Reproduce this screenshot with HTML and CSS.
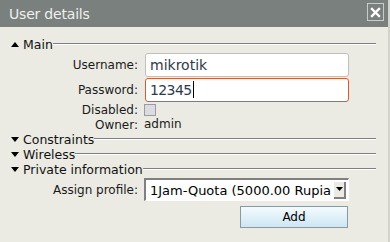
FILE: index.html
```html
<!DOCTYPE html>
<html lang="en">
<head>
  <meta charset="UTF-8">
  <title>User details</title>
  <link rel="stylesheet" href="styles.css">
</head>
<body>

  <!-- Dialog window -->
  <div class="window">
    <div class="titlebar">
      <span class="title">User details</span>
      <button class="close-btn" title="Close">
        <svg width="11" height="11" viewBox="0 0 11 11">
          <path d="M2 2 L9 9 M9 2 L2 9" stroke="#fff" stroke-width="2.4" stroke-linecap="square"/>
        </svg>
      </button>
    </div>

    <div class="content">
      <!-- Main section -->
      <div class="section">
        <div class="section-head">
          <span class="arrow up"></span>
          <span class="section-title">Main</span>
          <span class="rule"></span>
        </div>
        <div class="form-grid main-grid">
          <label class="field-label">Username:</label>
          <input class="text-input" type="text" value="mikrotik">

          <label class="field-label">Password:</label>
          <div class="text-input focused">12345<span class="caret"></span></div>

          <label class="field-label">Disabled:</label>
          <div class="check-cell"><span class="checkbox"></span></div>

          <label class="field-label">Owner:</label>
          <div class="static-value">admin</div>
        </div>
      </div>

      <!-- Collapsed sections -->
      <div class="section-head">
        <span class="arrow down"></span>
        <span class="section-title">Constraints</span>
        <span class="rule"></span>
      </div>
      <div class="section-head">
        <span class="arrow down"></span>
        <span class="section-title">Wireless</span>
        <span class="rule"></span>
      </div>

      <!-- Private information -->
      <div class="section">
        <div class="section-head">
          <span class="arrow down"></span>
          <span class="section-title">Private information</span>
          <span class="rule"></span>
        </div>
        <div class="form-grid">
          <label class="field-label">Assign profile:</label>
          <div class="select-box">
            <span class="select-text">1Jam-Quota (5000.00 Rupiah)</span>
            <span class="select-btn">
              <svg width="7" height="4" viewBox="0 0 7 4"><path d="M0 0 H7 L3.5 4 Z" fill="#000"/></svg>
            </span>
          </div>
        </div>
      </div>

      <div class="actions">
        <button class="add-btn">Add</button>
      </div>
    </div>
  </div>

</body>
</html>
```

FILE: styles.css
```css
body {
  margin: 0;
  background: #ebebe3;
  font-family: "DejaVu Sans", sans-serif;
  font-size: 12px;
  color: #1a1a1a;
}

.window {
  width: 390px;
  height: 242px;
  box-sizing: border-box;
  border-right: 2px solid #d2d3cc;
  background: #ebebe3;
  overflow: hidden;
}

/* Title bar */
.titlebar {
  height: 27px;
  background: #7a807d;
  display: flex;
  align-items: center;
  justify-content: space-between;
  padding: 0 4px 0 9px;
}

.title {
  color: #eef1ee;
  font-size: 14px;
  letter-spacing: -0.2px;
}

.close-btn {
  width: 17px;
  height: 18px;
  margin-top: -3px;
  padding: 0;
  border: 1px solid #c9cdca;
  background: transparent;
  display: flex;
  align-items: center;
  justify-content: center;
}

.content {
  padding: 10px 11px 0 11px;
}

/* Section headers */
.section-head {
  display: flex;
  align-items: center;
  height: 15px;
  line-height: 15px;
}

.arrow {
  width: 0;
  height: 0;
  border-left: 4px solid transparent;
  border-right: 4px solid transparent;
  margin-right: 4px;
}

.arrow.up {
  border-bottom: 5px solid #000;
}

.arrow.down {
  border-top: 5px solid #000;
}

.section-title {
  font-size: 12.5px;
  color: #111;
}

.rule {
  flex: 1;
  align-self: flex-start;
  height: 1px;
  margin-top: 6px;
  margin-right: 1px;
  background: #7f7f7f;
  border-bottom: 1px solid #fff;
}

/* Form rows */
.form-grid {
  display: grid;
  grid-template-columns: 127px 204px;
  column-gap: 6px;
  row-gap: 1px;
  align-items: center;
  padding-top: 1px;
}

.main-grid {
  grid-template-rows: 24px 24px 13px 15px;
}

.field-label {
  text-align: right;
  line-height: 14px;
}

.text-input {
  box-sizing: border-box;
  height: 24px;
  width: 204px;
  margin-left: 1px;
  border: 1px solid #c0c0bc;
  border-radius: 3px;
  background: #fff;
  padding: 0 4px;
  font-family: "DejaVu Sans", sans-serif;
  font-size: 14px;
  color: #2d3a4c;
  line-height: 22px;
  outline: none;
}

.text-input.focused {
  border-color: #e0592a;
  letter-spacing: -0.6px;
}

.caret {
  display: inline-block;
  width: 1px;
  height: 17px;
  background: #000;
  vertical-align: -3px;
  margin-left: 1px;
}

.check-cell {
  height: 13px;
  display: flex;
  align-items: center;
}

.checkbox {
  width: 10px;
  height: 10px;
  border: 1px solid #9a9aa8;
  background: #dcdce0;
}

.static-value {
  height: 15px;
  line-height: 15px;
}

/* Select */
.select-box {
  box-sizing: border-box;
  height: 23px;
  width: 205px;
  display: flex;
  align-items: center;
  background: #fff;
  border-top: 2px solid #808080;
  border-left: 2px solid #808080;
  border-right: 1px solid #fff;
  border-bottom: 1px solid #fff;
  padding-left: 4px;
}

.select-text {
  flex: 1;
  margin-right: 3px;
  font-size: 13px;
  white-space: nowrap;
  overflow: hidden;
  color: #000;
}

.select-btn {
  width: 10px;
  height: 15px;
  margin-right: 2px;
  border-right: 2px solid #808080;
  border-bottom: 2px solid #808080;
  background: #ebebe3;
  display: flex;
  align-items: center;
  justify-content: center;
}

/* Buttons */
.actions {
  display: flex;
  justify-content: flex-end;
  padding: 5px 29px 0 0;
}

.add-btn {
  width: 108px;
  height: 22px;
  border: 1px solid #8a9aa3;
  background: linear-gradient(#f4fbfe, #cde6f3);
  font-family: "DejaVu Sans", sans-serif;
  font-size: 12px;
  color: #000;
  padding: 0;
}
```
